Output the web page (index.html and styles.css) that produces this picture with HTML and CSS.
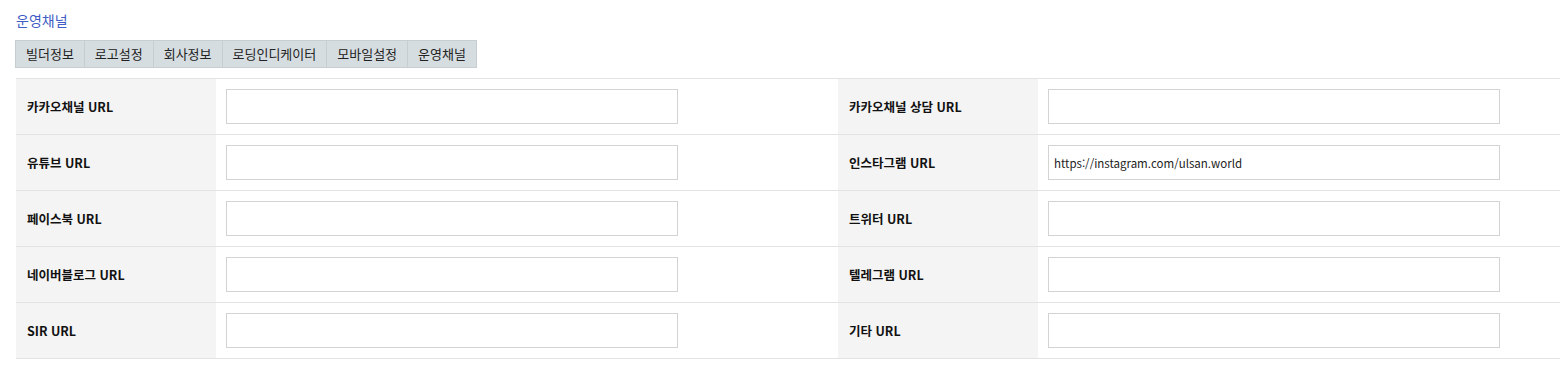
FILE: index.html
```html
<!DOCTYPE html>
<html lang="ko">
  <head>
    <meta charset="utf-8">
    <meta name="viewport" content="width=device-width, initial-scale=1">
    <title>운영채널</title>
    <link rel="stylesheet" href="styles.css">
  </head>
  <body>
    <h2 class="page-title">운영채널</h2>
    <ul class="tabs">
        <li>빌더정보</li>
        <li>로고설정</li>
        <li>회사정보</li>
        <li>로딩인디케이터</li>
        <li>모바일설정</li>
        <li>운영채널</li>
    </ul>
    <table class="frm">
        <tr>
            <th>카카오채널 URL</th>
            <td><input type="text"></td>
            <th>카카오채널 상담 URL</th>
            <td><input type="text"></td>
        </tr>
        <tr>
            <th>유튜브 URL</th>
            <td><input type="text"></td>
            <th>인스타그램 URL</th>
            <td><input type="text" value="https://instagram.com/ulsan.world"></td>
        </tr>
        <tr>
            <th>페이스북 URL</th>
            <td><input type="text"></td>
            <th>트위터 URL</th>
            <td><input type="text"></td>
        </tr>
        <tr>
            <th>네이버블로그 URL</th>
            <td><input type="text"></td>
            <th>텔레그램 URL</th>
            <td><input type="text"></td>
        </tr>
        <tr>
            <th>SIR URL</th>
            <td><input type="text"></td>
            <th>기타 URL</th>
            <td><input type="text"></td>
        </tr>
    </table>
  </body>
</html>
```

FILE: styles.css
```css
body {
    margin: 0;
    padding: 0 0 0 16px;
    font-family: "Noto Sans CJK KR", "Noto Sans", sans-serif;
    font-size: 12px;
    color: #000;
    background: #fff;
    overflow: hidden;
}
.page-title {
    margin: 0;
    padding-top: 11px;
    height: 29px;
    font-size: 14px;
    line-height: 18px;
    font-weight: normal;
    color: #3f5dc4;
}
.tabs {
    display: flex;
    margin: 0 0 10px -1px;
    padding: 0;
    list-style: none;
    width: max-content;
    border: 1px solid #c6ced2;
    background: #d6dde1;
}
.tabs li {
    height: 26px;
    line-height: 26px;
    padding: 0 10px;
    font-size: 13px;
    color: #222;
    border-left: 1px solid #c6ced2;
}
.tabs li:first-child {
    border-left: 0;
}
.frm {
    border-collapse: collapse;
    width: 1544px;
    border-top: 1px solid #e3e3e3;
}
.frm tr {
    border-bottom: 1px solid #e3e3e3;
}
.frm th {
    width: 200px;
    height: 55px;
    padding: 0 11px;
    box-sizing: border-box;
    background: #f4f4f4;
    text-align: left;
    font-size: 12.5px;
    font-weight: bold;
    color: #111;
}
.frm td {
    padding: 0 10px;
    height: 55px;
}
.frm td:nth-child(2) {
    width: 622px;
    box-sizing: border-box;
}
.frm input {
    display: block;
    width: 452px;
    height: 35px;
    box-sizing: border-box;
    border: 1px solid #d3d3d3;
    padding: 0 5px;
    font-family: "Noto Sans CJK KR", "Noto Sans", sans-serif;
    font-size: 11.5px;
    color: #222;
    outline: none;
}
```
